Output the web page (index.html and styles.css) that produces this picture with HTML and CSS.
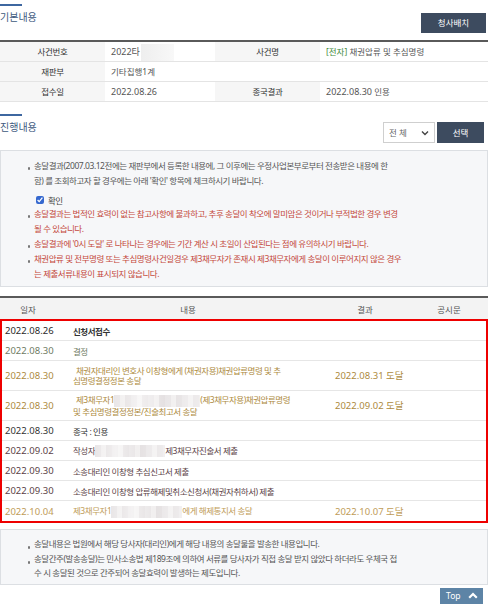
FILE: index.html
```html
<!DOCTYPE html>
<html lang="ko">
<head>
<meta charset="utf-8">
<title>사건 진행내용</title>
<link rel="stylesheet" href="styles.css">
</head>
<body>
<div class="page">
  <div class="sec-head first">
    <h2 class="sec-title">기본내용</h2>
    <button class="btn-dark btn-map">청사배치</button>
  </div>
  <table class="info">
    <colgroup><col class="c1"><col class="c2"><col class="c3"><col class="c4"></colgroup>
    <tr>
      <th>사건번호</th>
      <td class="num">2022타<span class="blur blur-a"></span></td>
      <th>사건명</th>
      <td><span class="green">[전자]</span> 채권압류 및 추심명령</td>
    </tr>
    <tr>
      <th>재판부</th>
      <td colspan="3">기타집행1계</td>
    </tr>
    <tr>
      <th>접수일</th>
      <td class="num">2022.08.26</td>
      <th>종국결과</th>
      <td><span class="num">2022.08.30</span> 인용</td>
    </tr>
  </table>

  <div class="sec-head second">
    <h2 class="sec-title">진행내용</h2>
    <div class="controls">
      <div class="select">전 체
        <svg class="chev" width="8" height="6" viewBox="0 0 8 6"><polyline points="1,1.5 4,4.5 7,1.5" fill="none" stroke="#444" stroke-width="1.4"/></svg>
      </div>
      <button class="btn-dark btn-sel">선택</button>
    </div>
  </div>

  <div class="notice">
    <ul>
      <li>송달결과(2007.03.12전에는 재판부에서 등록한 내용에, 그 이후에는 우정사업본부로부터 전송받은 내용에 한<br>함) 를 조회하고자 할 경우에는 아래 '확인' 항목에 체크하시기 바랍니다.</li>
    </ul>
    <label class="check"><input type="checkbox" checked> 확인</label>
    <ul class="red">
      <li>송달결과는 법적인 효력이 없는 참고사항에 불과하고, 추후 송달이 착오에 말미암은 것이거나 부적법한 경우 변경<br>될 수 있습니다.</li>
      <li>송달결과에 '0시 도달' 로 나타나는 경우에는 기간 계산 시 초일이 산입된다는 점에 유의하시기 바랍니다.</li>
      <li>채권압류 및 전부명령 또는 추심명령사건일경우 제3채무자가 존재시 제3채무자에게 송달이 이루어지지 않은 경우<br>는 제출서류내용이 표시되지 않습니다.</li>
    </ul>
  </div>

  <div class="prog-head">
    <span>일자</span><span>내용</span><span>결과</span><span>공시문</span>
  </div>
  <div class="highlight">
    <div class="row t-black"><span class="d">2022.08.26</span><span class="c strong">신청서접수</span><span></span><span></span></div>
    <div class="row t-olive"><span class="d">2022.08.30</span><span class="c">결정</span><span></span><span></span></div>
    <div class="row t-gold multi"><span class="d">2022.08.30</span><span class="c"><span class="ind">채권자대리인 변호사 이창형에게 (채권자용)채권압류명령 및 추</span><br>심명령결정정본 송달</span><span class="d r">2022.08.31 도달</span><span></span></div>
    <div class="row t-gold multi"><span class="d">2022.08.30</span><span class="c"><span class="ind">제3채무자1<span class="blur blur-b"></span>(제3채무자용)채권압류명령</span><br>및 추심명령결정정본/진술최고서 송달</span><span class="d r">2022.09.02 도달</span><span></span></div>
    <div class="row t-dark"><span class="d">2022.08.30</span><span class="c">종국 : 인용</span><span></span><span></span></div>
    <div class="row t-plum"><span class="d">2022.09.02</span><span class="c">작성자<span class="blur blur-c"></span>제3채무자진술서 제출</span><span></span><span></span></div>
    <div class="row t-plum"><span class="d">2022.09.30</span><span class="c">소송대리인 이창형 추심신고서 제출</span><span></span><span></span></div>
    <div class="row t-plum"><span class="d">2022.09.30</span><span class="c">소송대리인 이창형 압류해제및취소신청서(채권자취하서) 제출</span><span></span><span></span></div>
    <div class="row t-lgold last"><span class="d">2022.10.04</span><span class="c">제3채무자1<span class="blur blur-d"></span>에게 해제통지서 송달</span><span class="d r">2022.10.07 도달</span><span></span></div>
  </div>

  <div class="notice bottom">
    <ul>
      <li>송달내용은 법원에서 해당 당사자(대리인)에게 해당 내용의 송달물을 발송한 내용입니다.</li>
      <li>송달간주(발송송달)는 민사소송법 제189조에 의하여 서류를 당사자가 직접 송달 받지 않았다 하더라도 우체국 접<br>수 시 송달된 것으로 간주되어 송달효력이 발생하는 제도입니다.</li>
    </ul>
  </div>

  <div class="top-row">
    <a class="top-btn" href="#">Top
      <svg width="10" height="7" viewBox="0 0 10 7"><polyline points="1.2,5.8 5,2 8.8,5.8" fill="none" stroke="#fff" stroke-width="2.2"/></svg>
    </a>
  </div>
</div>
</body>
</html>
```
FILE: styles.css
```css
* { box-sizing: border-box; }
html, body { margin: 0; padding: 0; background: #fff; }
body {
  font-family: "Noto Sans", "Noto Sans CJK KR", sans-serif;
  font-size: 8.5px;
  color: #555;
}
.page { width: 488px; }

.sec-head {
  display: flex;
  justify-content: space-between;
  align-items: flex-start;
}
.sec-head.first { padding-top: 4px; }
.sec-head.second { padding-top: 12px; }
.sec-title {
  margin: 0;
  font-size: 10px;
  font-weight: normal;
  line-height: 14px;
  color: #3d5a80;
}
.sec-title::before {
  content: "";
  display: block;
  width: 22px;
  height: 2px;
  background: #3e67a0;
  margin-bottom: 4px;
}
.btn-dark {
  border: 0;
  padding: 0;
  background: #3d4b5f;
  color: #fff;
  font-family: inherit;
  font-size: 8.5px;
  line-height: 20px;
  height: 20px;
  cursor: pointer;
}
.btn-map { width: 65px; margin: 9px 2px 7px 0; }

.info {
  width: 488px;
  border-collapse: collapse;
  table-layout: fixed;
  border-top: 2px solid #5a5a5a;
}
.info .c1 { width: 105px; }
.info .c2 { width: 110px; }
.info .c3 { width: 105px; }
.info .c4 { width: 168px; }
.info th, .info td {
  height: 20px;
  padding: 0;
  line-height: 19px;
  border-bottom: 1px solid #e4e4e4;
  white-space: nowrap;
}
.info th {
  background: #f6f6f6;
  font-weight: normal;
  color: #333;
  text-align: center;
  letter-spacing: -0.3px;
}
.info td { padding-left: 6px; color: #555; }
.num { font-size: 9px; }
.green { color: #3f8a3a; }

.blur {
  display: inline-block;
  vertical-align: middle;
  height: 12px;
  background:
    linear-gradient(90deg, rgba(255,255,255,0) 0, rgba(255,255,255,0.5) 30%, rgba(255,255,255,0) 60%, rgba(255,255,255,0.4) 100%),
    repeating-linear-gradient(90deg, #e9e6e7 0 6px, #f1efef 6px 11px, #e4e0e1 11px 17px);
}
.blur-a { width: 33px; height: 17px; margin-left: 1px; background: linear-gradient(90deg, #eeeeee, #f4f4f4 60%, #f8f8f8); }
.blur-b { width: 86px; }
.blur-c { width: 70px; }
.blur-d { width: 71px; }

.controls { display: flex; gap: 2px; margin: 8px 4px 7px 0; }
.select {
  width: 52px;
  height: 21px;
  border: 1px solid #cfcfcf;
  background: #fff;
  color: #666;
  line-height: 19px;
  padding-left: 5px;
  display: flex;
  align-items: center;
  justify-content: space-between;
  padding-right: 5px;
}
.btn-sel { width: 47px; height: 21px; line-height: 21px; }

.notice {
  border: 1px solid #dcdfe3;
  background: #f6f7f9;
  padding: 7px 0 5px 0;
  letter-spacing: -0.45px;
}
.notice ul { list-style: none; margin: 0; padding: 0 0 0 33px; }
.notice li { position: relative; line-height: 15px; }
.notice li::before {
  content: "";
  position: absolute;
  left: -6px;
  top: 9px;
  width: 1.5px;
  height: 3px;
  background: #777;
  border-radius: 1px;
}
.notice .red li { color: #c4473b; }
.check {
  display: flex;
  align-items: center;
  gap: 4px;
  margin: 5px 0 0 35px;
  height: 13px;
  color: #444;
}
.check input {
  margin: 0;
  width: 8px;
  height: 8px;
  accent-color: #3568cf;
}

.prog-head {
  margin-top: 9px;
  display: grid;
  grid-template-columns: 56px 264px 90px 78px;
  height: 23px;
  align-items: center;
  text-align: center;
  background: #f3f3f3;
  border-top: 2px solid #5a5a5a;
  color: #555;
}

.highlight { border: 2px solid #ee0000; width: 488px; }
.row {
  display: grid;
  grid-template-columns: 66px 262px 85px 71px;
  align-items: center;
  height: 20px;
  border-bottom: 1px solid #e6e6e6;
  white-space: nowrap;
}
.row.multi { height: 30px; line-height: 9.5px; }
.row.last { border-bottom: 0; height: 20px; }
.row .d { padding-left: 3px; font-size: 9.5px; }
.row .c { padding-left: 5px; overflow: hidden; letter-spacing: -0.45px; }
.row .r { padding-left: 5px; }
.row .ind { padding-left: 3px; }
.row .strong { font-weight: bold; color: #333; }
.t-black { color: #2a2a2a; }
.t-olive { color: #6f7b64; }
.t-gold { color: #ad8a3e; }
.t-dark { color: #333; }
.t-plum { color: #5b3f47; }
.t-lgold { color: #c09c58; }

.notice.bottom { margin-top: 6px; padding: 7px 0 3px 0; }
.notice.bottom li { color: #555; line-height: 14.5px; }

.top-row { display: flex; justify-content: flex-end; padding: 3px 5px 0 0; }
.top-btn {
  display: flex;
  align-items: center;
  justify-content: space-between;
  width: 43px;
  height: 16px;
  padding: 0 5px 0 6px;
  background: #5d84a6;
  color: #fff;
  text-decoration: none;
  font-size: 8.5px;
}
```
